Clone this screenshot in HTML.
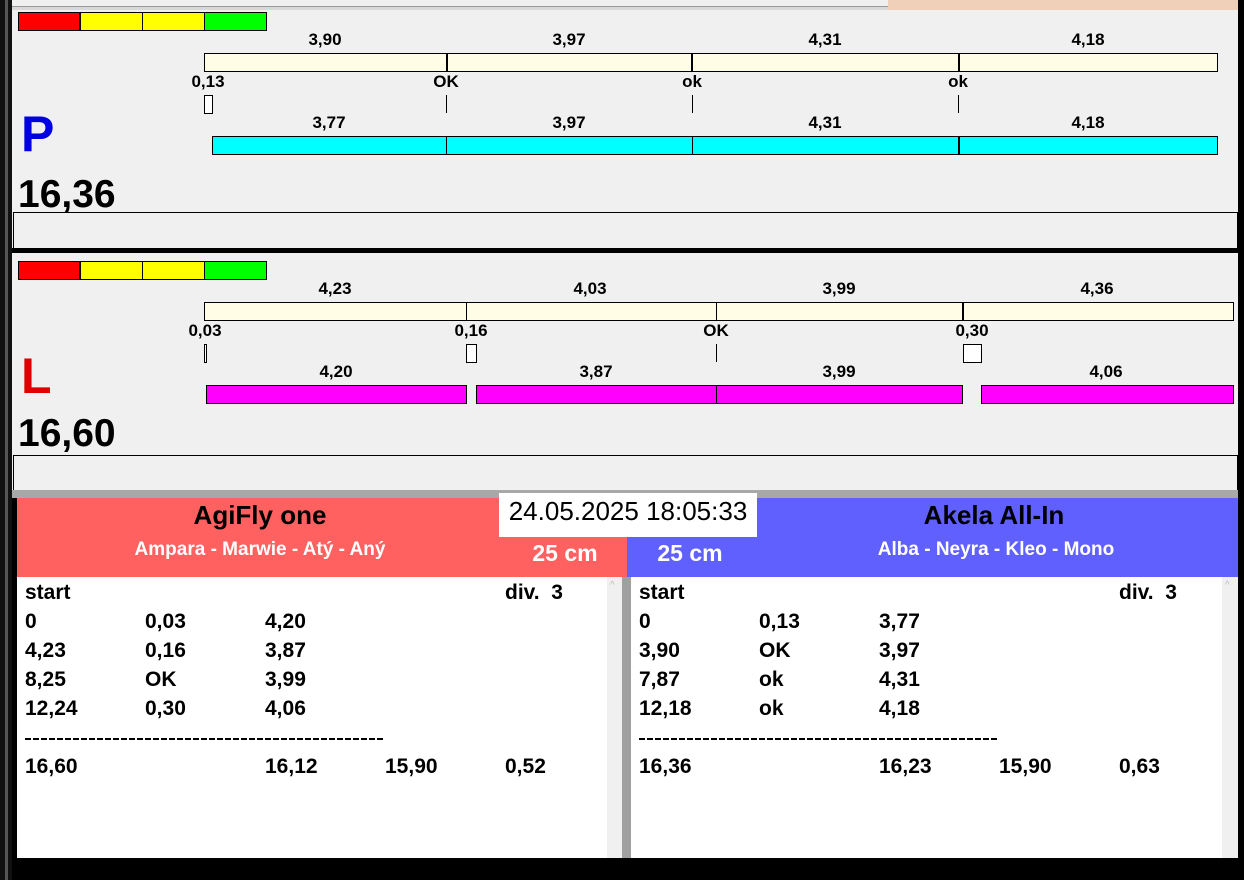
<!DOCTYPE html>
<html><head><meta charset="utf-8"><style>
*{margin:0;padding:0;box-sizing:border-box}
body{width:1244px;height:880px;background:#000;position:relative;overflow:hidden;font-family:"Liberation Sans",Arial,sans-serif;font-weight:bold;color:#000}
div,span{position:absolute}
.c{transform:translateX(-50%);white-space:nowrap;font-size:17px;line-height:18px}
.bar{border:1px solid #000}
.cr{background:#fffde6}
.cy{background:#00ffff}
.mg{background:#ff00ff}
.dv{width:2px;background:#000}
.tk{width:1px;background:#000}
.box{background:#fff;border:1px solid #000}
.l{font-size:21px;line-height:24px;white-space:nowrap}
.dash{height:2px;background:repeating-linear-gradient(90deg,#000 0 6px,transparent 6px 8px)}
</style></head><body>
<div style="left:0;top:0;width:1244px;height:12px;background:#d8d8d8"></div>
<div style="left:12px;top:0;width:876px;height:7px;background:#f0f0f0;border-bottom:1px solid #999"></div>
<div style="left:888px;top:0;width:352px;height:12px;background:#f0d0b8"></div>
<div style="left:0;top:0;width:12px;height:880px;background:#111"></div>
<div style="left:5px;top:0;width:3px;height:880px;background:#555"></div>
<div style="left:1238px;top:0;width:6px;height:880px;background:#000"></div>

<div style="left:12px;top:10px;width:1226px;height:240px;background:#f0f0f0"></div>
<div style="left:18px;top:12px;width:62px;height:19px;background:#f00;border:1px solid #000"></div>
<div style="left:80px;top:12px;width:63px;height:19px;background:#ff0;border:1px solid #000"></div>
<div style="left:142px;top:12px;width:63px;height:19px;background:#ff0;border:1px solid #000"></div>
<div style="left:204px;top:12px;width:63px;height:19px;background:#0f0;border:1px solid #000"></div>

<div class="c" style="left:325px;top:31px">3,90</div>
<div class="c" style="left:569px;top:31px">3,97</div>
<div class="c" style="left:825px;top:31px">4,31</div>
<div class="c" style="left:1088px;top:31px">4,18</div>
<div class="bar cr" style="left:204px;top:53px;width:1014px;height:19px"></div>
<div class="dv" style="left:446px;top:53px;height:19px"></div>
<div class="dv" style="left:691px;top:53px;height:19px"></div>
<div class="dv" style="left:958px;top:53px;height:19px"></div>
<div class="c" style="left:208px;top:73px">0,13</div>
<div class="c" style="left:446px;top:73px">OK</div>
<div class="c" style="left:692px;top:73px">ok</div>
<div class="c" style="left:958px;top:73px">ok</div>
<div class="box" style="left:204px;top:95px;width:9px;height:19px"></div>
<div class="tk" style="left:446px;top:95px;height:18px"></div>
<div class="tk" style="left:692px;top:95px;height:18px"></div>
<div class="tk" style="left:958px;top:95px;height:18px"></div>
<div class="c" style="left:329px;top:114px">3,77</div>
<div class="c" style="left:569px;top:114px">3,97</div>
<div class="c" style="left:825px;top:114px">4,31</div>
<div class="c" style="left:1088px;top:114px">4,18</div>
<div class="bar cy" style="left:212px;top:136px;width:1006px;height:19px"></div>
<div class="tk" style="left:446px;top:136px;height:19px"></div>
<div class="tk" style="left:692px;top:136px;height:19px"></div>
<div class="dv" style="left:958px;top:136px;height:19px"></div>
<div style="left:21px;top:104px;font-size:50px;line-height:60px;color:#0000e0">P</div>
<div style="left:18px;top:172px;font-size:39px;line-height:46px">16,36</div>
<div style="left:13px;top:212px;width:1225px;height:37px;border:1px solid #000;border-bottom:none"></div>
<div style="left:12px;top:248px;width:1226px;height:5px;background:#000"></div>

<div style="left:12px;top:253px;width:1226px;height:237px;background:#f0f0f0"></div>
<div style="left:18px;top:261px;width:62px;height:19px;background:#f00;border:1px solid #000"></div>
<div style="left:80px;top:261px;width:63px;height:19px;background:#ff0;border:1px solid #000"></div>
<div style="left:142px;top:261px;width:63px;height:19px;background:#ff0;border:1px solid #000"></div>
<div style="left:204px;top:261px;width:63px;height:19px;background:#0f0;border:1px solid #000"></div>

<div class="c" style="left:335px;top:280px">4,23</div>
<div class="c" style="left:590px;top:280px">4,03</div>
<div class="c" style="left:839px;top:280px">3,99</div>
<div class="c" style="left:1097px;top:280px">4,36</div>
<div class="bar cr" style="left:204px;top:302px;width:1030px;height:19px"></div>
<div class="tk" style="left:466px;top:302px;height:19px"></div>
<div class="tk" style="left:716px;top:302px;height:19px"></div>
<div class="dv" style="left:962px;top:302px;height:19px"></div>
<div class="c" style="left:205px;top:322px">0,03</div>
<div class="c" style="left:471px;top:322px">0,16</div>
<div class="c" style="left:716px;top:322px">OK</div>
<div class="c" style="left:972px;top:322px">0,30</div>
<div class="box" style="left:204px;top:344px;width:3px;height:19px"></div>
<div class="box" style="left:466px;top:344px;width:11px;height:19px"></div>
<div class="tk" style="left:716px;top:344px;height:18px"></div>
<div class="box" style="left:963px;top:344px;width:19px;height:19px"></div>
<div class="c" style="left:336px;top:363px">4,20</div>
<div class="c" style="left:596px;top:363px">3,87</div>
<div class="c" style="left:839px;top:363px">3,99</div>
<div class="c" style="left:1106px;top:363px">4,06</div>
<div class="bar mg" style="left:206px;top:385px;width:261px;height:19px"></div>
<div class="bar mg" style="left:476px;top:385px;width:487px;height:19px"></div>
<div class="tk" style="left:716px;top:385px;height:19px"></div>
<div class="bar mg" style="left:981px;top:385px;width:253px;height:19px"></div>
<div style="left:21px;top:346px;font-size:50px;line-height:60px;color:#e00000">L</div>
<div style="left:18px;top:411px;font-size:39px;line-height:46px">16,60</div>
<div style="left:13px;top:455px;width:1225px;height:36px;border:1px solid #000;border-bottom:none"></div>
<div style="left:12px;top:490px;width:1226px;height:8px;background:#a8a8a8"></div>

<div style="left:17px;top:498px;width:610px;height:79px;background:#ff6060"></div>
<div style="left:627px;top:498px;width:611px;height:79px;background:#6060ff"></div>
<div class="c" style="left:260px;top:500px;font-size:26px;line-height:30px">AgiFly one</div>
<div class="c" style="left:260px;top:539px;font-size:19px;line-height:22px;color:#fff">Ampara - Marwie - Atý - Aný</div>
<div class="c" style="left:565px;top:540px;font-size:23px;line-height:26px;color:#fff">25 cm</div>
<div class="c" style="left:690px;top:540px;font-size:23px;line-height:26px;color:#fff">25 cm</div>
<div class="c" style="left:994px;top:500px;font-size:26px;line-height:30px">Akela All-In</div>
<div class="c" style="left:996px;top:539px;font-size:19px;line-height:22px;color:#fff">Alba - Neyra - Kleo - Mono</div>
<div style="left:499px;top:493px;width:258px;height:44px;background:#fff"></div>
<div class="c" style="left:628px;top:496px;font-size:26px;line-height:30px;font-weight:normal">24.05.2025 18:05:33</div>

<div style="left:17px;top:577px;width:590px;height:281px;background:#fff"></div>
<div style="left:607px;top:577px;width:15px;height:281px;background:#f0f0f0"></div>
<div style="left:622px;top:577px;width:9px;height:281px;background:#a0a0a0"></div>
<div style="left:631px;top:577px;width:591px;height:281px;background:#fff"></div>
<div style="left:1222px;top:577px;width:16px;height:281px;background:#f0f0f0"></div>
<div style="left:610px;top:580px;font-size:10px;color:#bbb;font-weight:normal">^</div>
<div style="left:1225px;top:580px;font-size:10px;color:#bbb;font-weight:normal">^</div>

<div class="l" style="left:25px;top:581px">start</div><div class="l" style="left:505px;top:581px">div.&nbsp; 3</div>
<div class="l" style="left:25px;top:610px">0</div><div class="l" style="left:145px;top:610px">0,03</div><div class="l" style="left:265px;top:610px">4,20</div>
<div class="l" style="left:25px;top:639px">4,23</div><div class="l" style="left:145px;top:639px">0,16</div><div class="l" style="left:265px;top:639px">3,87</div>
<div class="l" style="left:25px;top:668px">8,25</div><div class="l" style="left:145px;top:668px">OK</div><div class="l" style="left:265px;top:668px">3,99</div>
<div class="l" style="left:25px;top:697px">12,24</div><div class="l" style="left:145px;top:697px">0,30</div><div class="l" style="left:265px;top:697px">4,06</div>
<div class="dash" style="left:25px;top:738px;width:359px"></div>
<div class="l" style="left:25px;top:755px">16,60</div><div class="l" style="left:265px;top:755px">16,12</div><div class="l" style="left:385px;top:755px">15,90</div><div class="l" style="left:505px;top:755px">0,52</div>

<div class="l" style="left:639px;top:581px">start</div><div class="l" style="left:1119px;top:581px">div.&nbsp; 3</div>
<div class="l" style="left:639px;top:610px">0</div><div class="l" style="left:759px;top:610px">0,13</div><div class="l" style="left:879px;top:610px">3,77</div>
<div class="l" style="left:639px;top:639px">3,90</div><div class="l" style="left:759px;top:639px">OK</div><div class="l" style="left:879px;top:639px">3,97</div>
<div class="l" style="left:639px;top:668px">7,87</div><div class="l" style="left:759px;top:668px">ok</div><div class="l" style="left:879px;top:668px">4,31</div>
<div class="l" style="left:639px;top:697px">12,18</div><div class="l" style="left:759px;top:697px">ok</div><div class="l" style="left:879px;top:697px">4,18</div>
<div class="dash" style="left:639px;top:738px;width:359px"></div>
<div class="l" style="left:639px;top:755px">16,36</div><div class="l" style="left:879px;top:755px">16,23</div><div class="l" style="left:999px;top:755px">15,90</div><div class="l" style="left:1119px;top:755px">0,63</div>
</body></html>
